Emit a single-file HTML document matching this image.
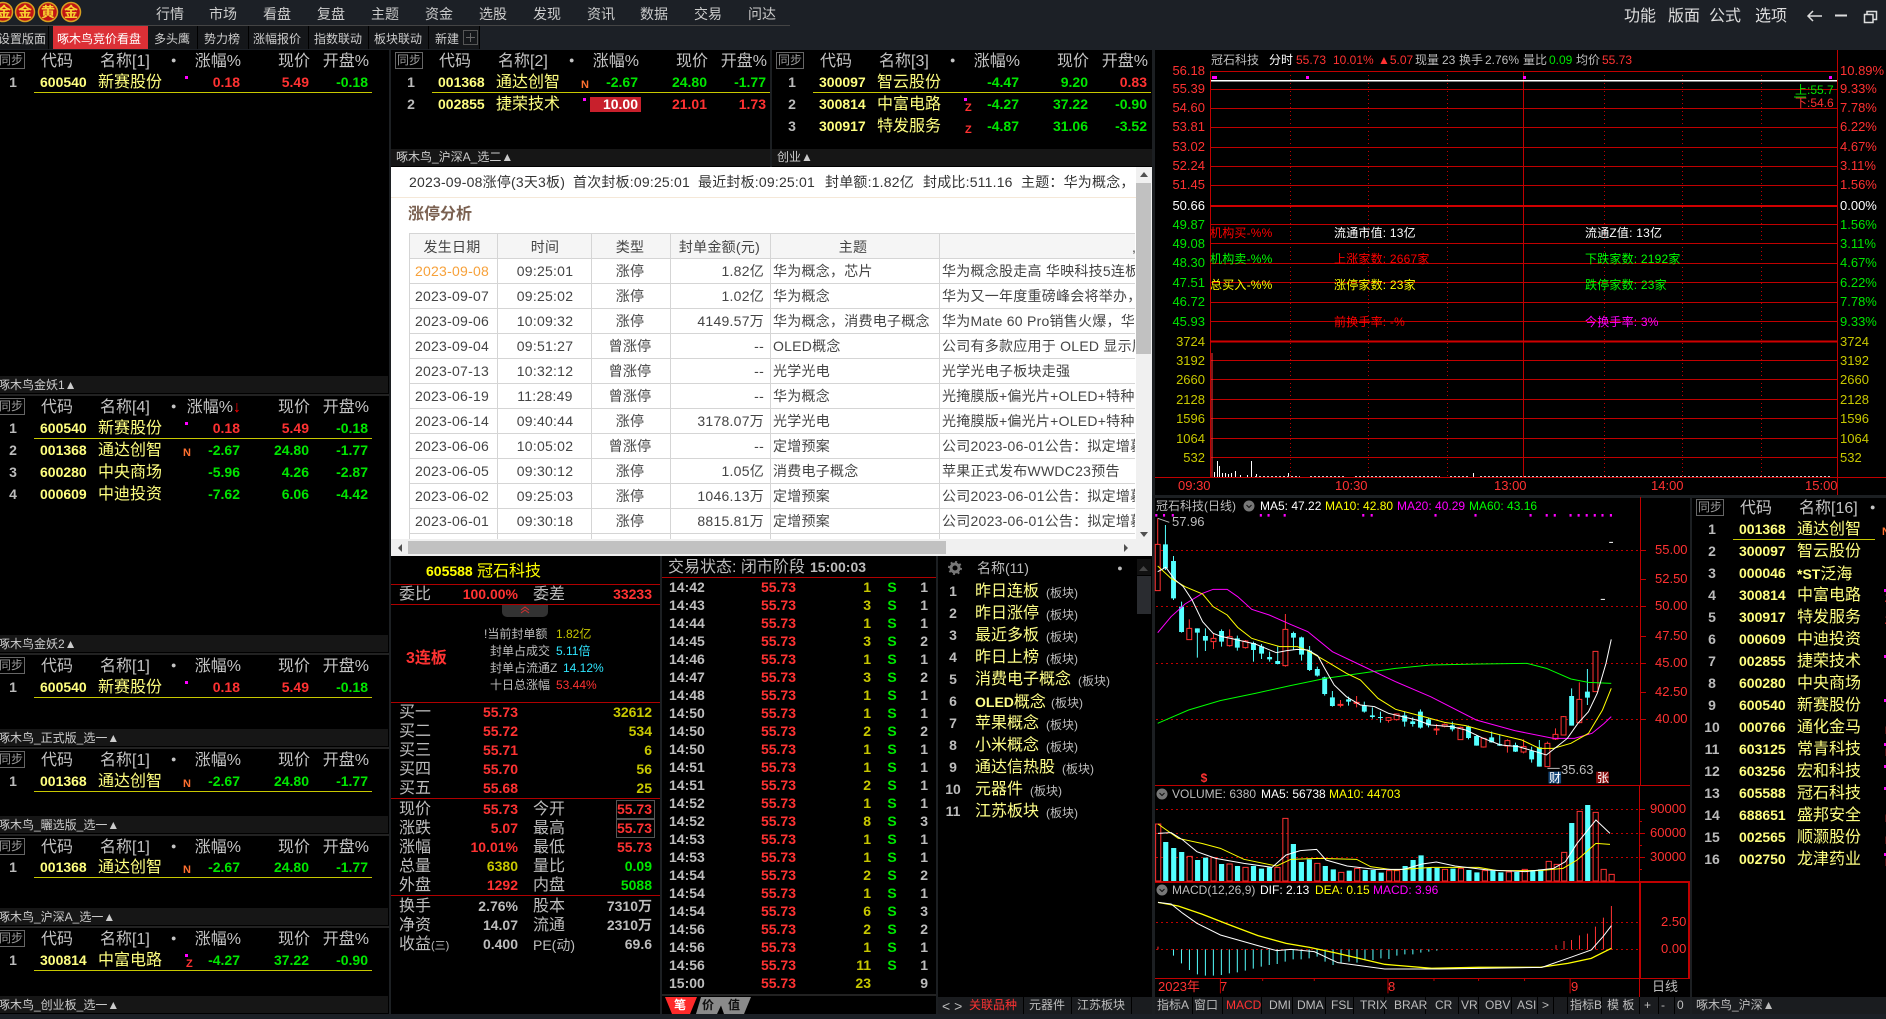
<!DOCTYPE html>
<html lang="zh"><head><meta charset="utf-8"><title>通达信</title>
<style>
html,body{margin:0;padding:0;background:#000}
body{position:relative;width:1886px;height:1019px;overflow:hidden;font-family:"Liberation Sans","WenQuanYi Zen Hei","Noto Sans CJK SC",sans-serif;font-size:13px;color:#ccc}
div,svg{position:absolute}
svg{left:0;top:0;overflow:visible}
.bx{background:#1c2026}
i{position:absolute;font-style:normal;line-height:20px;margin-top:-10px;white-space:nowrap}
.re{color:#ff3232}.gr{color:#00e600}.ye{color:#ffff00}.dy{color:#c8c800}.wh{color:#fff}.gy{color:#bdbdbd}.ma{color:#ff00ff}.cy{color:#2fe6ff}.lr{color:#f00}
.r{transform:translateX(-100%)}.c{transform:translateX(-50%)}
.f12{font-size:12px}.f14{font-size:14px}.f16{font-size:16px;margin-top:-9px}
.ov{font-size:12px;letter-spacing:.2px}
.bd{font-weight:bold}
.w{width:0;height:0}
.w>*{position:absolute;line-height:20px;top:-10px;white-space:nowrap;font-style:normal;font-weight:bold;font-size:14px}
.w .i{left:13px;transform:translateX(-50%);color:#bbb}
.w .co{left:40px;color:#ffff80}
.w .nm{left:98px;top:-9px;font-size:16px;font-weight:normal;color:#ffff80}
.w .a{left:240px;transform:translateX(-100%)}
.w .b{left:309px;transform:translateX(-100%)}
.w .e{left:368px;transform:translateX(-100%)}
.w .dot{left:185px;top:-6px;width:3px;height:3px;background:#f0f}
.w .N{left:183px;top:-7px;font-size:11px;color:#ff7030}
.w .Z{left:186px;top:-6px;font-size:11px;color:#ff3232}
.w .sy{left:-3px;top:-8px;width:26px;height:15px;line-height:15px;border:1px solid #666;font-size:12px;font-weight:normal;color:#999;text-align:center}
.w .h1,.w .h2,.w .h3,.w .h4,.w .h5{top:-8px;font-size:16px;font-weight:normal;color:#c4c4c4}
.w .h1{left:41px}.w .h2{left:100px}.w .h3{left:171px;top:-10px;font-size:9px}
.w .h4{left:241px;transform:translateX(-100%)}.w .h5{left:278px}.w .h6{left:369px;top:-8px;transform:translateX(-100%);font-size:16px;font-weight:normal;color:#c4c4c4}
.w .ln{left:34px;top:10px;width:338px;height:1px;background:#c8c800}
.band{background:#161616;height:17px}
.tr{width:0;height:0;color:#444}
.tr>*{position:absolute;top:-10px;line-height:20px;white-space:nowrap;font-style:normal;font-size:14px;color:#444;letter-spacing:.25px}
.tr .d{left:452px;transform:translateX(-50%)}
.tr .t{left:545px;transform:translateX(-50%)}
.tr .y{left:630px;transform:translateX(-50%)}
.tr .m{left:764px;transform:translateX(-100%)}
.tr .h{left:773px}
.tr .x{left:942px}
.nf{color:#333;font-size:14px;letter-spacing:.2px}
.ql{background:#b00000;height:1px;left:391px;width:269px}
.tb{background:#1a1c1f;top:997px;height:17px}
</style></head><body>

<!-- top chrome -->
<div class="bx" style="left:0;top:0;width:1886px;height:50px"></div>
<div style="left:0;top:25px;width:790px;height:1px;background:#444"></div>
<svg width="90" height="26"><g stroke="#d8a020" stroke-width="1.5" fill="#c01414"><circle cx="3" cy="12" r="9.5"/><circle cx="25" cy="12" r="9.5"/><circle cx="48" cy="12" r="9.5"/><circle cx="71" cy="12" r="9.5"/></g></svg>
<i class="f14 bd c" style="left:4px;top:12px;color:#f8d030">金</i><i class="f14 bd c" style="left:25px;top:12px;color:#f8d030">金</i><i class="f14 bd c" style="left:48px;top:12px;color:#f8d030">黄</i><i class="f14 bd c" style="left:71px;top:12px;color:#f8d030">金</i>
<i class="c f14" style="left:170px;top:14px">行情</i><i class="c f14" style="left:223px;top:14px">市场</i><i class="c f14" style="left:277px;top:14px">看盘</i><i class="c f14" style="left:331px;top:14px">复盘</i><i class="c f14" style="left:385px;top:14px">主题</i><i class="c f14" style="left:439px;top:14px">资金</i><i class="c f14" style="left:493px;top:14px">选股</i><i class="c f14" style="left:547px;top:14px">发现</i><i class="c f14" style="left:601px;top:14px">资讯</i><i class="c f14" style="left:654px;top:14px">数据</i><i class="c f14" style="left:708px;top:14px">交易</i><i class="c f14" style="left:762px;top:14px">问达</i>
<i class="f16" style="left:1624px;top:16px;color:#ddd">功能</i><i class="f16" style="left:1668px;top:16px;color:#ddd">版面</i><i class="f16" style="left:1709px;top:16px;color:#ddd">公式</i><i class="f16" style="left:1755px;top:16px;color:#ddd">选项</i>
<svg width="1886" height="30" fill="none" stroke="#ddd" stroke-width="1.5"><path d="M1822 16H1808M1813 11L1808 16L1813 21"/><path d="M1835 15.500H1847" stroke-width="2"/><path d="M1864.500 14.500h8.500v8h-8.500zM1867 14.500v-3h9.500v8h-3.500"/></svg>

<!-- tabs -->
<div style="left:0;top:26px;width:479px;height:23px;background:#15171a"></div>
<div style="left:53px;top:26px;width:95px;height:23px;background:#dc3036"></div>
<svg width="500" height="50" stroke="#000"><path d="M48.500 26V49M197.500 26V49M248.500 26V49M308.500 26V49M368.500 26V49M428.500 26V49M479.500 26V49"/><rect x="463.500" y="30.500" width="14" height="14" fill="none" stroke="#555"/><path d="M466 37.500H475M470.500 33V42" stroke="#666"/></svg>
<i class="f12" style="left:-2px;top:39px">设置版面</i><i class="f12 wh" style="left:57px;top:39px">啄木鸟竞价看盘</i><i class="f12" style="left:154px;top:39px">多头鹰</i><i class="f12" style="left:204px;top:39px">势力榜</i><i class="f12" style="left:253px;top:39px">涨幅报价</i><i class="f12" style="left:314px;top:39px">指数联动</i><i class="f12" style="left:374px;top:39px">板块联动</i><i class="f12" style="left:435px;top:39px">新建</i>

<!-- separators -->
<div style="left:389px;top:50px;width:2px;height:969px;background:#1c1f22"></div>
<div style="left:770px;top:50px;width:2px;height:117px;background:#1c1f22"></div>
<div style="left:1152px;top:50px;width:3px;height:969px;background:#1c1f22"></div>
<div style="left:660px;top:556px;width:2px;height:463px;background:#1c1f22"></div>
<div style="left:936px;top:556px;width:2px;height:463px;background:#1c1f22"></div>
<div style="left:1690px;top:495px;width:2px;height:524px;background:#1c1f22"></div>
<div style="left:1155px;top:495px;width:731px;height:3px;background:#1c1f22"></div>
<div style="left:0;top:1014px;width:1886px;height:5px;background:#1c2026"></div>

<!-- left lists -->
<div class="w" style="left:0;top:60px"><u class="sy" style="text-decoration:none">同步</u><em class="h1">代码</em><em class="h2">名称[1]</em><em class="h3">●</em><em class="h4">涨幅%</em><em class="h5">现价</em><em class="h6">开盘%</em></div>
<div class="w" style="left:0;top:82px"><b class="i">1</b><b class="co">600540</b><em class="nm">新赛股份</em><u class="dot"></u><b class="a re">0.18</b><b class="b re">5.49</b><b class="e gr">-0.18</b><u class="ln"></u></div>

<div class="band" style="left:0;top:376px;width:388px"></div><i class="f12" style="left:-2px;top:385px">啄木鸟金妖1▲</i>
<div style="left:0;top:394px;width:389px;height:2px;background:#222"></div>
<div class="w" style="left:0;top:406px"><u class="sy" style="text-decoration:none">同步</u><em class="h1">代码</em><em class="h2">名称[4]</em><em class="h3">●</em><em class="h4">涨幅%<span class="lr">↓</span></em><em class="h5">现价</em><em class="h6">开盘%</em></div>
<div class="w" style="left:0;top:428px"><b class="i">1</b><b class="co">600540</b><em class="nm">新赛股份</em><u class="dot"></u><b class="a re">0.18</b><b class="b re">5.49</b><b class="e gr">-0.18</b><u class="ln"></u></div>
<div class="w" style="left:0;top:450px"><b class="i">2</b><b class="co">001368</b><em class="nm">通达创智</em><b class="N">N</b><b class="a gr">-2.67</b><b class="b gr">24.80</b><b class="e gr">-1.77</b></div>
<div class="w" style="left:0;top:472px"><b class="i">3</b><b class="co">600280</b><em class="nm">中央商场</em><b class="a gr">-5.96</b><b class="b gr">4.26</b><b class="e gr">-2.87</b></div>
<div class="w" style="left:0;top:494px"><b class="i">4</b><b class="co">000609</b><em class="nm">中迪投资</em><b class="a gr">-7.62</b><b class="b gr">6.06</b><b class="e gr">-4.42</b></div>

<div class="band" style="left:0;top:635px;width:388px"></div><i class="f12" style="left:-2px;top:644px">啄木鸟金妖2▲</i>
<div style="left:0;top:653px;width:389px;height:2px;background:#222"></div>
<div class="w" style="left:0;top:665px"><u class="sy" style="text-decoration:none">同步</u><em class="h1">代码</em><em class="h2">名称[1]</em><em class="h3">●</em><em class="h4">涨幅%</em><em class="h5">现价</em><em class="h6">开盘%</em></div>
<div class="w" style="left:0;top:687px"><b class="i">1</b><b class="co">600540</b><em class="nm">新赛股份</em><u class="dot"></u><b class="a re">0.18</b><b class="b re">5.49</b><b class="e gr">-0.18</b><u class="ln"></u></div>

<div class="band" style="left:0;top:729px;width:388px"></div><i class="f12" style="left:-2px;top:738px">啄木鸟_正式版_选一▲</i>
<div style="left:0;top:747px;width:389px;height:2px;background:#222"></div>
<div class="w" style="left:0;top:759px"><u class="sy" style="text-decoration:none">同步</u><em class="h1">代码</em><em class="h2">名称[1]</em><em class="h3">●</em><em class="h4">涨幅%</em><em class="h5">现价</em><em class="h6">开盘%</em></div>
<div class="w" style="left:0;top:781px"><b class="i">1</b><b class="co">001368</b><em class="nm">通达创智</em><b class="N">N</b><b class="a gr">-2.67</b><b class="b gr">24.80</b><b class="e gr">-1.77</b><u class="ln"></u></div>

<div class="band" style="left:0;top:816px;width:388px"></div><i class="f12" style="left:-2px;top:825px">啄木鸟_曬选版_选一▲</i>
<div style="left:0;top:834px;width:389px;height:2px;background:#222"></div>
<div class="w" style="left:0;top:846px"><u class="sy" style="text-decoration:none">同步</u><em class="h1">代码</em><em class="h2">名称[1]</em><em class="h3">●</em><em class="h4">涨幅%</em><em class="h5">现价</em><em class="h6">开盘%</em></div>
<div class="w" style="left:0;top:867px"><b class="i">1</b><b class="co">001368</b><em class="nm">通达创智</em><b class="N">N</b><b class="a gr">-2.67</b><b class="b gr">24.80</b><b class="e gr">-1.77</b><u class="ln"></u></div>

<div class="band" style="left:0;top:908px;width:388px"></div><i class="f12" style="left:-2px;top:917px">啄木鸟_沪深A_选一▲</i>
<div style="left:0;top:926px;width:389px;height:2px;background:#222"></div>
<div class="w" style="left:0;top:938px"><u class="sy" style="text-decoration:none">同步</u><em class="h1">代码</em><em class="h2">名称[1]</em><em class="h3">●</em><em class="h4">涨幅%</em><em class="h5">现价</em><em class="h6">开盘%</em></div>
<div class="w" style="left:0;top:960px"><b class="i">1</b><b class="co">300814</b><em class="nm">中富电路</em><u class="dot"></u><b class="Z">Z</b><b class="a gr">-4.27</b><b class="b gr">37.22</b><b class="e gr">-0.90</b><u class="ln"></u></div>

<div class="band" style="left:0;top:996px;width:388px"></div><i class="f12" style="left:-2px;top:1005px">啄木鸟_创业板_选一▲</i>

<!-- col 2 -->
<div class="w" style="left:398px;top:60px"><u class="sy" style="text-decoration:none">同步</u><em class="h1">代码</em><em class="h2">名称[2]</em><em class="h3">●</em><em class="h4">涨幅%</em><em class="h5">现价</em><em class="h6">开盘%</em></div>
<div class="w" style="left:398px;top:82px"><b class="i">1</b><b class="co">001368</b><em class="nm">通达创智</em><b class="N">N</b><b class="a gr">-2.67</b><b class="b gr">24.80</b><b class="e gr">-1.77</b><u class="ln"></u></div>
<div style="left:590px;top:97px;width:51px;height:15px;background:#c8202c"></div>
<div class="w" style="left:398px;top:104px"><b class="i">2</b><b class="co">002855</b><em class="nm">捷荣技术</em><u class="dot"></u><b class="a wh">10.00</b><b class="b re">21.01</b><b class="e re">1.73</b></div>
<div class="band" style="left:391px;top:149px;width:379px"></div><i class="f12" style="left:396px;top:157px">啄木鸟_沪深A_选二▲</i>

<!-- col 3 -->
<div class="w" style="left:779px;top:60px"><u class="sy" style="text-decoration:none">同步</u><em class="h1">代码</em><em class="h2">名称[3]</em><em class="h3">●</em><em class="h4">涨幅%</em><em class="h5">现价</em><em class="h6">开盘%</em></div>
<div class="w" style="left:779px;top:82px"><b class="i">1</b><b class="co">300097</b><em class="nm">智云股份</em><b class="a gr">-4.47</b><b class="b gr">9.20</b><b class="e re">0.83</b><u class="ln"></u></div>
<div class="w" style="left:779px;top:104px"><b class="i">2</b><b class="co">300814</b><em class="nm">中富电路</em><u class="dot"></u><b class="Z">Z</b><b class="a gr">-4.27</b><b class="b gr">37.22</b><b class="e gr">-0.90</b></div>
<div class="w" style="left:779px;top:126px"><b class="i">3</b><b class="co">300917</b><em class="nm">特发服务</em><b class="Z">Z</b><b class="a gr">-4.87</b><b class="b gr">31.06</b><b class="e gr">-3.52</b></div>
<div class="band" style="left:772px;top:149px;width:380px"></div><i class="f12" style="left:777px;top:157px">创业▲</i>

<!-- browser panel -->
<div style="left:391px;top:167px;width:761px;height:389px;background:#fff"></div>
<svg width="1886" height="600" shape-rendering="crispEdges">
<rect x="409" y="233" width="726" height="25" fill="#f5f5f5"/>
<path d="M391 197.500H1136" stroke="#f5e8d8"/>
<path d="M409.500 233V539M497.500 233V539M591.500 233V539M670.500 233V539M770.500 233V539M939.500 233V539M409 233.500H1135M409 258.500H1135M409 283.500H1135M409 308.500H1135M409 333.500H1135M409 358.500H1135M409 383.500H1135M409 408.500H1135M409 433.500H1135M409 458.500H1135M409 483.500H1135M409 508.500H1135M409 533.500H1135" stroke="#d5d5d5"/>
</svg>
<i class="nf" style="left:409px;top:182px">2023-09-08涨停(3天3板)</i><i class="nf" style="left:573px;top:182px">首次封板:09:25:01</i><i class="nf" style="left:698px;top:182px">最近封板:09:25:01</i><i class="nf" style="left:825px;top:182px">封单额:1.82亿</i><i class="nf" style="left:923px;top:182px">封成比:511.16</i><i class="nf" style="left:1021px;top:182px">主题：华为概念，</i>
<i class="f16 bd" style="left:408px;top:214px;color:#7a6050">涨停分析</i>
<div style="left:391px;top:167px;width:744px;height:372px;overflow:hidden">
<div style="left:-391px;top:-167px;width:1886px;height:1019px">
<div class="tr" style="left:0;top:247px"><em class="d">发生日期</em><em class="t">时间</em><em class="y">类型</em><em class="m" style="left:760px">封单金额(元)</em><em class="h" style="left:853px;transform:translateX(-50%)">主题</em><em class="x" style="left:1132px">,</em></div>
<div class="tr" style="left:0;top:271px"><em class="d" style="color:#f7a13a">2023-09-08</em><em class="t">09:25:01</em><em class="y">涨停</em><em class="m">1.82亿</em><em class="h">华为概念，芯片</em><em class="x">华为概念股走高 华映科技5连板</em></div>
<div class="tr" style="left:0;top:296px"><em class="d">2023-09-07</em><em class="t">09:25:02</em><em class="y">涨停</em><em class="m">1.02亿</em><em class="h">华为概念</em><em class="x">华为又一年度重磅峰会将举办，</em></div>
<div class="tr" style="left:0;top:321px"><em class="d">2023-09-06</em><em class="t">10:09:32</em><em class="y">涨停</em><em class="m">4149.57万</em><em class="h">华为概念，消费电子概念</em><em class="x">华为Mate 60 Pro销售火爆，华为</em></div>
<div class="tr" style="left:0;top:346px"><em class="d">2023-09-04</em><em class="t">09:51:27</em><em class="y">曾涨停</em><em class="m">--</em><em class="h">OLED概念</em><em class="x">公司有多款应用于 OLED 显示屏</em></div>
<div class="tr" style="left:0;top:371px"><em class="d">2023-07-13</em><em class="t">10:32:12</em><em class="y">曾涨停</em><em class="m">--</em><em class="h">光学光电</em><em class="x">光学光电子板块走强</em></div>
<div class="tr" style="left:0;top:396px"><em class="d">2023-06-19</em><em class="t">11:28:49</em><em class="y">曾涨停</em><em class="m">--</em><em class="h">华为概念</em><em class="x">光掩膜版+偏光片+OLED+特种膜</em></div>
<div class="tr" style="left:0;top:421px"><em class="d">2023-06-14</em><em class="t">09:40:44</em><em class="y">涨停</em><em class="m">3178.07万</em><em class="h">光学光电</em><em class="x">光掩膜版+偏光片+OLED+特种膜</em></div>
<div class="tr" style="left:0;top:446px"><em class="d">2023-06-06</em><em class="t">10:05:02</em><em class="y">曾涨停</em><em class="m">--</em><em class="h">定增预案</em><em class="x">公司2023-06-01公告：拟定增募</em></div>
<div class="tr" style="left:0;top:471px"><em class="d">2023-06-05</em><em class="t">09:30:12</em><em class="y">涨停</em><em class="m">1.05亿</em><em class="h">消费电子概念</em><em class="x">苹果正式发布WWDC23预告</em></div>
<div class="tr" style="left:0;top:496px"><em class="d">2023-06-02</em><em class="t">09:25:03</em><em class="y">涨停</em><em class="m">1046.13万</em><em class="h">定增预案</em><em class="x">公司2023-06-01公告：拟定增募</em></div>
<div class="tr" style="left:0;top:521px"><em class="d">2023-06-01</em><em class="t">09:30:18</em><em class="y">涨停</em><em class="m">8815.81万</em><em class="h">定增预案</em><em class="x">公司2023-06-01公告：拟定增募</em></div>
</div></div>
<div style="left:1136px;top:167px;width:16px;height:389px;background:#f0f0f0"></div>
<div style="left:1136px;top:183px;width:15px;height:171px;background:#c1c1c1"></div>
<div style="left:391px;top:539px;width:745px;height:17px;background:#f0f0f0"></div>
<div style="left:408px;top:541px;width:538px;height:13px;background:#c1c1c1"></div>
<svg width="1886" height="600" fill="#505050"><path d="M1140 532h8l-4 5zM1140 177h8l-4-5zM402 544v8l-4-4zM1124 544v8l4-4z"/></svg>

<!-- quote panel -->
<i class="f14 bd ye" style="left:426px;top:571px">605588</i><i class="f16 ye" style="left:477px;top:571px">冠石科技</i>
<div class="ql" style="top:584px"></div><div class="ql" style="top:604px"></div><div class="ql" style="top:702px"></div><div class="ql" style="top:798px"></div><div class="ql" style="top:895px"></div>
<i class="f16 gy" style="left:399px;top:594px">委比</i><i class="f14 bd re r" style="left:518px;top:594px">100.00%</i><i class="f16 gy" style="left:533px;top:594px">委差</i><i class="f14 bd re r" style="left:652px;top:594px">33233</i>
<div style="left:502px;top:605px;width:46px;height:12px;background:#333;border-radius:0 0 5px 5px"></div>
<svg width="1886" height="700" fill="none" stroke="#d03030"><path d="M521 610l4-3 4 3M521 613l4-3 4 3"/></svg>
<i class="f16 bd re" style="left:406px;top:658px">3连板</i>
<i class="f12 gy" style="left:484px;top:634px">!当前封单额</i><i class="f12 dy" style="left:556px;top:634px">1.82亿</i>
<i class="f12 gy" style="left:490px;top:651px">封单占成交</i><i class="f12 cy" style="left:556px;top:651px">5.11倍</i>
<i class="f12 gy" style="left:490px;top:668px">封单占流通Z</i><i class="f12 cy" style="left:563px;top:668px">14.12%</i>
<i class="f12 gy" style="left:490px;top:685px">十日总涨幅</i><i class="f12 re" style="left:556px;top:685px">53.44%</i>
<i class="f16 gy" style="left:399px;top:712px">买一</i><i class="f14 bd re r" style="left:518px;top:712px">55.73</i><i class="f14 bd dy r" style="left:652px;top:712px">32612</i>
<i class="f16 gy" style="left:399px;top:731px">买二</i><i class="f14 bd re r" style="left:518px;top:731px">55.72</i><i class="f14 bd dy r" style="left:652px;top:731px">534</i>
<i class="f16 gy" style="left:399px;top:750px">买三</i><i class="f14 bd re r" style="left:518px;top:750px">55.71</i><i class="f14 bd dy r" style="left:652px;top:750px">6</i>
<i class="f16 gy" style="left:399px;top:769px">买四</i><i class="f14 bd re r" style="left:518px;top:769px">55.70</i><i class="f14 bd dy r" style="left:652px;top:769px">56</i>
<i class="f16 gy" style="left:399px;top:788px">买五</i><i class="f14 bd re r" style="left:518px;top:788px">55.68</i><i class="f14 bd dy r" style="left:652px;top:788px">25</i>
<i class="f16 gy" style="left:399px;top:809px">现价</i><i class="f14 bd re r" style="left:518px;top:809px">55.73</i><i class="f16 gy" style="left:533px;top:809px">今开</i><i class="f14 bd re r" style="left:652px;top:809px">55.73</i>
<i class="f16 gy" style="left:399px;top:828px">涨跌</i><i class="f14 bd re r" style="left:518px;top:828px">5.07</i><i class="f16 gy" style="left:533px;top:828px">最高</i><i class="f14 bd re r" style="left:652px;top:828px">55.73</i>
<i class="f16 gy" style="left:399px;top:847px">涨幅</i><i class="f14 bd re r" style="left:518px;top:847px">10.01%</i><i class="f16 gy" style="left:533px;top:847px">最低</i><i class="f14 bd re r" style="left:652px;top:847px">55.73</i>
<i class="f16 gy" style="left:399px;top:866px">总量</i><i class="f14 bd dy r" style="left:518px;top:866px">6380</i><i class="f16 gy" style="left:533px;top:866px">量比</i><i class="f14 bd gr r" style="left:652px;top:866px">0.09</i>
<i class="f16 gy" style="left:399px;top:885px">外盘</i><i class="f14 bd re r" style="left:518px;top:885px">1292</i><i class="f16 gy" style="left:533px;top:885px">内盘</i><i class="f14 bd gr r" style="left:652px;top:885px">5088</i>
<svg width="1886" height="900" fill="none" stroke="#555"><path d="M616.500 800.500h38v18h-38zM616.500 819.500h38v18h-38z"/></svg>
<i class="f16 gy" style="left:399px;top:906px">换手</i><i class="f14 bd gy r" style="left:518px;top:906px">2.76%</i><i class="f16 gy" style="left:533px;top:906px">股本</i><i class="f14 bd gy r" style="left:652px;top:906px">7310万</i>
<i class="f16 gy" style="left:399px;top:925px">净资</i><i class="f14 bd gy r" style="left:518px;top:925px">14.07</i><i class="f16 gy" style="left:533px;top:925px">流通</i><i class="f14 bd gy r" style="left:652px;top:925px">2310万</i>
<i class="f16 gy" style="left:399px;top:944px">收益<span style="font-size:11px">(三)</span></i><i class="f14 bd gy r" style="left:518px;top:944px">0.400</i><i class="f14 gy" style="left:533px;top:945px">PE(动)</i><i class="f14 bd gy r" style="left:652px;top:944px">69.6</i>

<!-- trades -->
<i class="f16 gy" style="left:668px;top:567px">交易状态: 闭市阶段</i><i class="f14 bd gy" style="left:810px;top:567px">15:00:03</i>
<div style="left:662px;top:577px;width:274px;height:1px;background:#b00000"></div>
<i class="f14 bd gy" style="left:669px;top:587px">14:42</i><i class="f14 bd re r" style="left:796px;top:587px">55.73</i><i class="f14 bd dy r" style="left:871px;top:587px">1</i><i class="f14 bd gr c" style="left:892px;top:587px">S</i><i class="f14 bd gy r" style="left:928px;top:587px">1</i>
<i class="f14 bd gy" style="left:669px;top:605px">14:43</i><i class="f14 bd re r" style="left:796px;top:605px">55.73</i><i class="f14 bd dy r" style="left:871px;top:605px">3</i><i class="f14 bd gr c" style="left:892px;top:605px">S</i><i class="f14 bd gy r" style="left:928px;top:605px">1</i>
<i class="f14 bd gy" style="left:669px;top:623px">14:44</i><i class="f14 bd re r" style="left:796px;top:623px">55.73</i><i class="f14 bd dy r" style="left:871px;top:623px">1</i><i class="f14 bd gr c" style="left:892px;top:623px">S</i><i class="f14 bd gy r" style="left:928px;top:623px">1</i>
<i class="f14 bd gy" style="left:669px;top:641px">14:45</i><i class="f14 bd re r" style="left:796px;top:641px">55.73</i><i class="f14 bd dy r" style="left:871px;top:641px">3</i><i class="f14 bd gr c" style="left:892px;top:641px">S</i><i class="f14 bd gy r" style="left:928px;top:641px">2</i>
<i class="f14 bd gy" style="left:669px;top:659px">14:46</i><i class="f14 bd re r" style="left:796px;top:659px">55.73</i><i class="f14 bd dy r" style="left:871px;top:659px">1</i><i class="f14 bd gr c" style="left:892px;top:659px">S</i><i class="f14 bd gy r" style="left:928px;top:659px">1</i>
<i class="f14 bd gy" style="left:669px;top:677px">14:47</i><i class="f14 bd re r" style="left:796px;top:677px">55.73</i><i class="f14 bd dy r" style="left:871px;top:677px">3</i><i class="f14 bd gr c" style="left:892px;top:677px">S</i><i class="f14 bd gy r" style="left:928px;top:677px">2</i>
<i class="f14 bd gy" style="left:669px;top:695px">14:48</i><i class="f14 bd re r" style="left:796px;top:695px">55.73</i><i class="f14 bd dy r" style="left:871px;top:695px">1</i><i class="f14 bd gr c" style="left:892px;top:695px">S</i><i class="f14 bd gy r" style="left:928px;top:695px">1</i>
<i class="f14 bd gy" style="left:669px;top:713px">14:50</i><i class="f14 bd re r" style="left:796px;top:713px">55.73</i><i class="f14 bd dy r" style="left:871px;top:713px">1</i><i class="f14 bd gr c" style="left:892px;top:713px">S</i><i class="f14 bd gy r" style="left:928px;top:713px">1</i>
<i class="f14 bd gy" style="left:669px;top:731px">14:50</i><i class="f14 bd re r" style="left:796px;top:731px">55.73</i><i class="f14 bd dy r" style="left:871px;top:731px">2</i><i class="f14 bd gr c" style="left:892px;top:731px">S</i><i class="f14 bd gy r" style="left:928px;top:731px">2</i>
<i class="f14 bd gy" style="left:669px;top:749px">14:50</i><i class="f14 bd re r" style="left:796px;top:749px">55.73</i><i class="f14 bd dy r" style="left:871px;top:749px">1</i><i class="f14 bd gr c" style="left:892px;top:749px">S</i><i class="f14 bd gy r" style="left:928px;top:749px">1</i>
<i class="f14 bd gy" style="left:669px;top:767px">14:51</i><i class="f14 bd re r" style="left:796px;top:767px">55.73</i><i class="f14 bd dy r" style="left:871px;top:767px">1</i><i class="f14 bd gr c" style="left:892px;top:767px">S</i><i class="f14 bd gy r" style="left:928px;top:767px">1</i>
<i class="f14 bd gy" style="left:669px;top:785px">14:51</i><i class="f14 bd re r" style="left:796px;top:785px">55.73</i><i class="f14 bd dy r" style="left:871px;top:785px">2</i><i class="f14 bd gr c" style="left:892px;top:785px">S</i><i class="f14 bd gy r" style="left:928px;top:785px">1</i>
<i class="f14 bd gy" style="left:669px;top:803px">14:52</i><i class="f14 bd re r" style="left:796px;top:803px">55.73</i><i class="f14 bd dy r" style="left:871px;top:803px">1</i><i class="f14 bd gr c" style="left:892px;top:803px">S</i><i class="f14 bd gy r" style="left:928px;top:803px">1</i>
<i class="f14 bd gy" style="left:669px;top:821px">14:52</i><i class="f14 bd re r" style="left:796px;top:821px">55.73</i><i class="f14 bd dy r" style="left:871px;top:821px">8</i><i class="f14 bd gr c" style="left:892px;top:821px">S</i><i class="f14 bd gy r" style="left:928px;top:821px">3</i>
<i class="f14 bd gy" style="left:669px;top:839px">14:53</i><i class="f14 bd re r" style="left:796px;top:839px">55.73</i><i class="f14 bd dy r" style="left:871px;top:839px">1</i><i class="f14 bd gr c" style="left:892px;top:839px">S</i><i class="f14 bd gy r" style="left:928px;top:839px">1</i>
<i class="f14 bd gy" style="left:669px;top:857px">14:53</i><i class="f14 bd re r" style="left:796px;top:857px">55.73</i><i class="f14 bd dy r" style="left:871px;top:857px">1</i><i class="f14 bd gr c" style="left:892px;top:857px">S</i><i class="f14 bd gy r" style="left:928px;top:857px">1</i>
<i class="f14 bd gy" style="left:669px;top:875px">14:54</i><i class="f14 bd re r" style="left:796px;top:875px">55.73</i><i class="f14 bd dy r" style="left:871px;top:875px">2</i><i class="f14 bd gr c" style="left:892px;top:875px">S</i><i class="f14 bd gy r" style="left:928px;top:875px">2</i>
<i class="f14 bd gy" style="left:669px;top:893px">14:54</i><i class="f14 bd re r" style="left:796px;top:893px">55.73</i><i class="f14 bd dy r" style="left:871px;top:893px">1</i><i class="f14 bd gr c" style="left:892px;top:893px">S</i><i class="f14 bd gy r" style="left:928px;top:893px">1</i>
<i class="f14 bd gy" style="left:669px;top:911px">14:54</i><i class="f14 bd re r" style="left:796px;top:911px">55.73</i><i class="f14 bd dy r" style="left:871px;top:911px">6</i><i class="f14 bd gr c" style="left:892px;top:911px">S</i><i class="f14 bd gy r" style="left:928px;top:911px">3</i>
<i class="f14 bd gy" style="left:669px;top:929px">14:56</i><i class="f14 bd re r" style="left:796px;top:929px">55.73</i><i class="f14 bd dy r" style="left:871px;top:929px">2</i><i class="f14 bd gr c" style="left:892px;top:929px">S</i><i class="f14 bd gy r" style="left:928px;top:929px">2</i>
<i class="f14 bd gy" style="left:669px;top:947px">14:56</i><i class="f14 bd re r" style="left:796px;top:947px">55.73</i><i class="f14 bd dy r" style="left:871px;top:947px">1</i><i class="f14 bd gr c" style="left:892px;top:947px">S</i><i class="f14 bd gy r" style="left:928px;top:947px">1</i>
<i class="f14 bd gy" style="left:669px;top:965px">14:56</i><i class="f14 bd re r" style="left:796px;top:965px">55.73</i><i class="f14 bd dy r" style="left:871px;top:965px">11</i><i class="f14 bd gr c" style="left:892px;top:965px">S</i><i class="f14 bd gy r" style="left:928px;top:965px">1</i>
<i class="f14 bd gy" style="left:669px;top:983px">15:00</i><i class="f14 bd re r" style="left:796px;top:983px">55.73</i><i class="f14 bd dy r" style="left:871px;top:983px">23</i><i class="f14 bd gy r" style="left:928px;top:983px">9</i>
<div style="left:662px;top:994px;width:274px;height:2px;background:#222"></div>
<svg width="1886" height="1019"><path d="M665 997H697L690 1014H672z" fill="#ff2a2a"/><path d="M701 997H725L717 1014H696z" fill="#8a8a8a"/><path d="M718 997H751L744 1014H724z" fill="#8a8a8a"/></svg>
<i class="f12 bd wh c" style="left:680px;top:1005px">笔</i><i class="f12 bd c" style="left:708px;top:1005px;color:#111">价</i><i class="f12 bd c" style="left:734px;top:1005px;color:#111">值</i>

<!-- related names -->
<svg width="1886" height="700" fill="none"><circle cx="955" cy="568" r="4" stroke="#777" stroke-width="3"/><circle cx="955" cy="568" r="6" stroke="#777" stroke-width="2" stroke-dasharray="2 2.700"/></svg>
<i class="f14 gy" style="left:977px;top:568px">名称(11)</i><i class="gy c" style="left:1120px;top:568px;font-size:9px">●</i>
<div style="left:1137px;top:559px;width:14px;height:16px;background:#111"></div>
<div style="left:1137px;top:576px;width:14px;height:38px;background:#2a2c30"></div>
<svg width="1886" height="1019" fill="#444"><path d="M1139 571h9l-4.500-5zM1139 1004h9l-4.500 5z"/></svg>
<i class="bd f14 gy c" style="left:953px;top:591px">1</i><i class="f16" style="left:975px;top:591px;color:#ffff88">昨日连板</i><i class="f12 gy" style="left:1046px;top:593px">(板块)</i>
<i class="bd f14 gy c" style="left:953px;top:613px">2</i><i class="f16" style="left:975px;top:613px;color:#ffff88">昨日涨停</i><i class="f12 gy" style="left:1046px;top:615px">(板块)</i>
<i class="bd f14 gy c" style="left:953px;top:635px">3</i><i class="f16" style="left:975px;top:635px;color:#ffff88">最近多板</i><i class="f12 gy" style="left:1046px;top:637px">(板块)</i>
<i class="bd f14 gy c" style="left:953px;top:657px">4</i><i class="f16" style="left:975px;top:657px;color:#ffff88">昨日上榜</i><i class="f12 gy" style="left:1046px;top:659px">(板块)</i>
<i class="bd f14 gy c" style="left:953px;top:679px">5</i><i class="f16" style="left:975px;top:679px;color:#ffff88">消费电子概念</i><i class="f12 gy" style="left:1078px;top:681px">(板块)</i>
<i class="bd f14 gy c" style="left:953px;top:701px">6</i><i class="f16" style="left:975px;top:701px;color:#ffff88"><b style="font-size:14px">OLED</b>概念</i><i class="f12 gy" style="left:1051px;top:703px">(板块)</i>
<i class="bd f14 gy c" style="left:953px;top:723px">7</i><i class="f16" style="left:975px;top:723px;color:#ffff88">苹果概念</i><i class="f12 gy" style="left:1046px;top:725px">(板块)</i>
<i class="bd f14 gy c" style="left:953px;top:745px">8</i><i class="f16" style="left:975px;top:745px;color:#ffff88">小米概念</i><i class="f12 gy" style="left:1046px;top:747px">(板块)</i>
<i class="bd f14 gy c" style="left:953px;top:767px">9</i><i class="f16" style="left:975px;top:767px;color:#ffff88">通达信热股</i><i class="f12 gy" style="left:1062px;top:769px">(板块)</i>
<i class="bd f14 gy c" style="left:953px;top:789px">10</i><i class="f16" style="left:975px;top:789px;color:#ffff88">元器件</i><i class="f12 gy" style="left:1030px;top:791px">(板块)</i>
<i class="bd f14 gy c" style="left:953px;top:811px">11</i><i class="f16" style="left:975px;top:811px;color:#ffff88">江苏板块</i><i class="f12 gy" style="left:1046px;top:813px">(板块)</i>
<div class="tb" style="left:938px;width:214px"></div>
<svg width="1886" height="1019" stroke="#000"><path d="M1023.500 997V1014M1071.500 997V1014M1131.500 997V1014"/></svg>
<i class="f16 gy" style="left:942px;top:1005px;font-size:14px">&lt; &gt;</i><i class="f12 re" style="left:969px;top:1005px">关联品种</i><i class="f12 gy" style="left:1029px;top:1005px">元器件</i><i class="f12 gy" style="left:1077px;top:1005px">江苏板块</i>

<!-- intraday chart -->
<i class="f12 gy" style="left:1211px;top:60px">冠石科技</i><i class="f12 wh" style="left:1269px;top:60px">分时</i><i class="f12 re" style="left:1296px;top:60px">55.73</i><i class="f12 re" style="left:1333px;top:60px">10.01%</i><i class="f12 re" style="left:1378px;top:60px">▲5.07</i><i class="f12 gy" style="left:1415px;top:60px">现量</i><i class="f12 gy" style="left:1442px;top:60px">23</i><i class="f12 gy" style="left:1459px;top:60px">换手</i><i class="f12 gy" style="left:1485px;top:60px">2.76%</i><i class="f12 gy" style="left:1523px;top:60px">量比</i><i class="f12 gr" style="left:1549px;top:60px">0.09</i><i class="f12 gy" style="left:1576px;top:60px">均价</i><i class="f12 re" style="left:1602px;top:60px">55.73</i>
<svg width="1886" height="500" shape-rendering="crispEdges" fill="none">
<path d="M1210 71.500H1837M1210 89.500H1837M1210 108.500H1837M1210 127.500H1837M1210 147.500H1837M1210 166.500H1837M1210 185.500H1837M1210 224.500H1837M1210 243.500H1837M1210 263.500H1837M1210 282.500H1837M1210 302.500H1837M1210 321.500H1837M1210 360.500H1837M1210 379.500H1837M1210 399.500H1837M1210 418.500H1837M1210 438.500H1837M1210 457.500H1837M1155 477.500H1886M1210.500 71V477M1523.500 71V477M1837.500 50V495" stroke="#c00000"/>
<path d="M1210 206H1837M1210 341.500H1837" stroke="#d00000" stroke-width="2"/>
<path d="M1290.500 71V477M1368.500 71V477M1447.500 71V477M1604.500 71V477M1682.500 71V477M1761.500 71V477" stroke="#c00000" stroke-dasharray="1 3"/>
<path d="M1211 80.500H1837" stroke="#fff" stroke-width="1.500"/>
<path d="M1212 76h5v3h-5zM1306 76h3v3h-3zM1523 76h3v3h-3zM1829 76h3v3h-3z" fill="#f0f"/>
<path d="M1212 353V477" stroke="#ff3232" stroke-width="1"/>
<path d="M1214.500 472V477M1217.500 461V477M1219.500 466V477M1222.500 473V477M1225.500 473V477M1228.500 474V477M1231.500 473V477M1235.500 471V477M1240.500 475V477M1247.500 475V477M1251.500 461V477M1256.500 474V477M1288.500 473V477M1473.500 473V477" stroke="#fff"/>
<path d="M1255 476.500H1300M1310 476.500H1344M1355 476.500H1440M1450 476.500H1470M1480 476.500H1830" stroke="#ccc" stroke-dasharray="2 2"/>
<path d="M1794 97H1806" stroke="#00e600"/>
</svg>
<i class="f12 gr" style="left:1795px;top:90px">上:55.7</i><i class="f12 re" style="left:1795px;top:103px">下:54.6</i>
<i class="re r" style="left:1205px;top:71px">56.18</i><i class="re r" style="left:1205px;top:89px">55.39</i><i class="re r" style="left:1205px;top:108px">54.60</i><i class="re r" style="left:1205px;top:127px">53.81</i><i class="re r" style="left:1205px;top:147px">53.02</i><i class="re r" style="left:1205px;top:166px">52.24</i><i class="re r" style="left:1205px;top:185px">51.45</i><i class="wh r" style="left:1205px;top:206px">50.66</i><i class="gr r" style="left:1205px;top:225px">49.87</i><i class="gr r" style="left:1205px;top:244px">49.08</i><i class="gr r" style="left:1205px;top:263px">48.30</i><i class="gr r" style="left:1205px;top:283px">47.51</i><i class="gr r" style="left:1205px;top:302px">46.72</i><i class="gr r" style="left:1205px;top:322px">45.93</i><i class="dy r" style="left:1205px;top:342px">3724</i><i class="dy r" style="left:1205px;top:361px">3192</i><i class="dy r" style="left:1205px;top:380px">2660</i><i class="dy r" style="left:1205px;top:400px">2128</i><i class="dy r" style="left:1205px;top:419px">1596</i><i class="dy r" style="left:1205px;top:439px">1064</i><i class="dy r" style="left:1205px;top:458px">532</i>
<i class="re" style="left:1840px;top:71px">10.89%</i><i class="re" style="left:1840px;top:89px">9.33%</i><i class="re" style="left:1840px;top:108px">7.78%</i><i class="re" style="left:1840px;top:127px">6.22%</i><i class="re" style="left:1840px;top:147px">4.67%</i><i class="re" style="left:1840px;top:166px">3.11%</i><i class="re" style="left:1840px;top:185px">1.56%</i><i class="wh" style="left:1840px;top:206px">0.00%</i><i class="gr" style="left:1840px;top:225px">1.56%</i><i class="gr" style="left:1840px;top:244px">3.11%</i><i class="gr" style="left:1840px;top:263px">4.67%</i><i class="gr" style="left:1840px;top:283px">6.22%</i><i class="gr" style="left:1840px;top:302px">7.78%</i><i class="gr" style="left:1840px;top:322px">9.33%</i><i class="dy" style="left:1840px;top:342px">3724</i><i class="dy" style="left:1840px;top:361px">3192</i><i class="dy" style="left:1840px;top:380px">2660</i><i class="dy" style="left:1840px;top:400px">2128</i><i class="dy" style="left:1840px;top:419px">1596</i><i class="dy" style="left:1840px;top:439px">1064</i><i class="dy" style="left:1840px;top:458px">532</i>
<i class="re" style="left:1178px;top:486px">09:30</i><i class="re" style="left:1335px;top:486px">10:30</i><i class="re" style="left:1494px;top:486px">13:00</i><i class="re" style="left:1651px;top:486px">14:00</i><i class="re" style="left:1805px;top:486px">15:00</i>
<i class="ov lr" style="left:1210px;top:233px">机构买-%%</i><i class="ov wh" style="left:1334px;top:233px">流通市值: 13亿</i><i class="ov wh" style="left:1585px;top:233px">流通Z值: 13亿</i>
<i class="ov" style="left:1210px;top:259px;color:#0f0">机构卖-%%</i><i class="ov lr" style="left:1334px;top:259px">上涨家数: 2667家</i><i class="ov" style="left:1585px;top:259px;color:#0f0">下跌家数: 2192家</i>
<i class="ov ye" style="left:1210px;top:285px">总买入-%%</i><i class="ov ye" style="left:1334px;top:285px">涨停家数: 23家</i><i class="ov" style="left:1585px;top:285px;color:#0f0">跌停家数: 23家</i>
<i class="ov lr" style="left:1334px;top:322px">前换手率: -%</i><i class="ov ma" style="left:1585px;top:322px">今换手率: 3%</i>

<!-- K-line -->
<i class="f12 gy" style="left:1156px;top:506px">冠石科技(日线)</i>
<svg width="1886" height="1019"><circle cx="1249" cy="506" r="5.500" fill="#777"/><circle cx="1162" cy="794" r="5.500" fill="#777"/><circle cx="1162" cy="890" r="5.500" fill="#777"/><path d="M1246.500 505l2.500 2.500 2.500-2.500M1159.500 793l2.500 2.500 2.500-2.500M1159.500 889l2.500 2.500 2.500-2.500" fill="none" stroke="#111"/></svg>
<i class="f12 wh" style="left:1260px;top:506px">MA5: 47.22</i><i class="f12 ye" style="left:1325px;top:506px">MA10: 42.80</i><i class="f12 ma" style="left:1397px;top:506px">MA20: 40.29</i><i class="f12" style="left:1469px;top:506px;color:#0f0">MA60: 43.16</i>
<svg width="1886" height="1019" shape-rendering="crispEdges" fill="none">
<path d="M1156 550.500H1640M1156 606.500H1640M1156 663.500H1640M1156 719.500H1640M1156 809.500H1639M1156 833.500H1639M1156 857.500H1639M1156 922.500H1639M1156 949.500H1639" stroke="#c00000" stroke-dasharray="2 3"/>
<path d="M1640.500 497V785M1155 785.500H1690M1639.500 785V997M1155 978.500H1690M1640 550.500h6M1640 579.500h6M1640 606.500h6M1640 636.500h6M1640 663.500h6M1640 692.500h6M1640 719.500h6M1639 809.500h6M1639 821.500h3M1639 833.500h6M1639 845.500h3M1639 857.500h6M1639 869.500h3" stroke="#c00000"/>
<path d="M1155 882H1690M1640 882.500V978M1689 882V978" stroke="#c00000" stroke-width="2"/>
</svg>
<svg width="550" height="300" viewBox="0 0 1568 900" preserveAspectRatio="none" style="left:1150px;top:490px">
<g fill="none">
<path vector-effect="non-scaling-stroke" stroke="#54ffff" d="M44 105V240M67 198V330M90 335V428M135 415V503M158 415V483M204 418V470M249 437V482M295 455V515M318 462V507M341 485V515M364 470V523M409 425V480M432 440V512M455 468V543M477 530V560M498 560V617M520 603V650M566 620V647M611 635V668M634 652V686M657 665V698M726 665V710M749 682V710M771 658V716M794 683V712M862 695V724M908 707V748M931 735V767M974 725V758M997 733V768M1042 758V786M1088 770V818M1110 750V830M1202 595V707M1247 537V645"/>
<path vector-effect="non-scaling-stroke" stroke="#ff3232" d="M22 85V302M112 388V449M181 432V477M227 418V470M272 450V476M386 372V530M543 630V652M589 618V652M680 681V698M703 670V692M817 702V735M840 700V712M885 710V749M951 743V773M1019 748V788M1065 748V790M1133 755V830M1156 715V750M1179 678V735M1224 577V700M1270 484V605"/>
<path fill="#54ffff" d="M37 163h14V235h-14zM60 213h14V325h-14zM83 350h14V426h-14zM128 415h14V428h-14zM151 438h14V452h-14zM197 423h14V455h-14zM242 445h14V473h-14zM288 459h14V480h-14zM311 469h14V491h-14zM334 501h14V508h-14zM357 513h14V522h-14zM402 429h14V443h-14zM425 442h14V494h-14zM448 482h14V540h-14zM470 537h14V557h-14zM491 562h14V612h-14zM513 622h14V648h-14zM559 628h14V635h-14zM604 646h14V665h-14zM627 676h14V681h-14zM650 681h14V684h-14zM719 676h14V695h-14zM742 694h14V702h-14zM764 665h14V713h-14zM787 688h14V706h-14zM855 706h14V718h-14zM901 710h14V744h-14zM924 738h14V767h-14zM967 742h14V757h-14zM990 762h14V767h-14zM1035 765h14V785h-14zM1081 782h14V808h-14zM1103 772h14V830h-14zM1195 618h14V707h-14zM1240 605h14V623h-14z"/>
<path vector-effect="non-scaling-stroke" fill="#000" stroke="#ff3232" d="M15 163h14V302h-14zM105 415h14V449h-14zM174 445h14V455h-14zM220 440h14V467h-14zM265 453h14V473h-14zM379 418h14V527h-14zM536 643h14V646h-14zM582 637h14V640h-14zM673 683h14V691h-14zM696 672h14V689h-14zM810 717h14V720h-14zM833 703h14V709h-14zM878 712h14V749h-14zM944 745h14V771h-14zM1012 752h14V768h-14zM1058 770h14V786h-14zM1126 760h14V830h-14zM1149 733h14V747h-14zM1172 680h14V735h-14zM1217 628h14V698h-14zM1263 484h14V605h-14z"/>
<path vector-effect="non-scaling-stroke" stroke="#0f0" d="M22 700L110 660L200 632L300 610L400 587L500 565L600 550L700 535L800 525L940 522L1075 520L1130 535L1200 567L1250 577L1315 580"/>
<path vector-effect="non-scaling-stroke" stroke="#f0f" d="M22 428L60 380L100 342L150 310L180 298L220 298L250 320L290 358L340 375L400 403L450 425L520 485L600 525L700 575L800 620L930 690L1040 722L1150 745L1210 745L1260 730L1295 700L1315 680"/>
<path vector-effect="non-scaling-stroke" stroke="#ff0" d="M22 228L60 265L100 290L150 312L180 350L220 375L250 412L290 445L330 458L370 470L420 470L450 482L500 512L560 550L600 570L650 625L700 658L780 680L840 697L900 707L950 722L1000 735L1060 750L1110 775L1150 775L1200 760L1250 730L1290 660L1315 595"/>
<path vector-effect="non-scaling-stroke" stroke="#fff" d="M22 245L45 232L70 268L95 290L120 330L150 395L180 430L205 440L230 445L270 455L300 462L330 475L360 488L390 482L420 478L450 480L478 497L498 535L525 585L560 620L600 645L640 650L680 670L720 680L760 690L800 705L860 710L900 720L950 745L1000 765L1050 770L1100 785L1130 795L1160 770L1190 745L1220 700L1250 665L1275 610L1300 520L1315 448"/>
<path vector-effect="non-scaling-stroke" stroke="#fff" d="M1309 157H1320M1285 328H1297"/>
<path vector-effect="non-scaling-stroke" stroke="#bbb" d="M22 85L55 97M1133 835H1168"/>
</g>
<path fill="#f0f" d="M15 72h6v8h-6zM37 72h6v8h-6zM62 72h6v8h-6zM313 72h6v8h-6zM335 72h6v8h-6zM381 72h6v8h-6zM605 72h6v8h-6zM629 72h6v8h-6zM811 72h6v8h-6zM925 72h6v8h-6zM1082 72h6v8h-6zM1128 72h6v8h-6zM1151 72h6v8h-6zM1196 72h6v8h-6zM1219 72h6v8h-6zM1242 72h6v8h-6zM1265 72h6v8h-6zM1287 72h6v8h-6zM1311 72h6v8h-6z"/>
<rect x="1136" y="845" width="36" height="35" fill="#1a4a7a"/><rect x="1272" y="845" width="36" height="35" fill="#8a0f0f"/>
</svg>
<i class="gy" style="left:1172px;top:522px">57.96</i><i class="gy" style="left:1561px;top:770px">35.63</i>
<i class="f12 wh c" style="left:1555px;top:778px">财</i><i class="f12 wh c" style="left:1603px;top:778px">张</i><i class="f12 bd re c" style="left:1204px;top:778px">$</i>
<i class="re" style="left:1655px;top:550px">55.00</i><i class="re" style="left:1655px;top:579px">52.50</i><i class="re" style="left:1655px;top:606px">50.00</i><i class="re" style="left:1655px;top:636px">47.50</i><i class="re" style="left:1655px;top:663px">45.00</i><i class="re" style="left:1655px;top:692px">42.50</i><i class="re" style="left:1655px;top:719px">40.00</i>

<!-- volume & MACD -->
<i class="gy" style="left:1172px;top:794px;font-size:12px">VOLUME: 6380</i><i class="wh" style="left:1261px;top:794px;font-size:12px">MA5: 56738</i><i class="ye" style="left:1329px;top:794px;font-size:12px">MA10: 44703</i>
<i class="re" style="left:1650px;top:809px">90000</i><i class="re" style="left:1650px;top:833px">60000</i><i class="re" style="left:1650px;top:857px">30000</i>
<svg width="736" height="239" viewBox="0 0 1568 717" preserveAspectRatio="none" style="left:1150px;top:780px" fill="none">
<path fill="#54ffff" d="M28 186h11V303h-11zM45 204h11V303h-11zM62 216h11V303h-11zM96 240h11V303h-11zM113 233h11V303h-11zM147 252h11V303h-11zM181 258h11V303h-11zM215 258h11V303h-11zM232 266h11V303h-11zM249 262h11V303h-11zM300 192h11V303h-11zM317 246h11V303h-11zM334 238h11V303h-11zM368 258h11V303h-11zM385 268h11V303h-11zM419 272h11V303h-11zM453 270h11V303h-11zM470 270h11V303h-11zM487 278h11V303h-11zM538 258h11V303h-11zM555 240h11V303h-11zM572 226h11V303h-11zM589 262h11V303h-11zM606 264h11V303h-11zM640 266h11V303h-11zM674 270h11V303h-11zM691 277h11V303h-11zM725 272h11V303h-11zM742 277h11V303h-11zM776 276h11V303h-11zM810 270h11V303h-11zM827 268h11V303h-11zM893 129h11V303h-11zM927 75h11V303h-11z"/>
<path vector-effect="non-scaling-stroke" stroke="#ff3232" d="M12 132h11V303h-11zM79 229h11V303h-11zM130 233h11V303h-11zM164 252h11V303h-11zM198 262h11V303h-11zM266 262h11V303h-11zM283 115h11V303h-11zM351 250h11V303h-11zM402 277h11V303h-11zM436 265h11V303h-11zM504 272h11V303h-11zM521 272h11V303h-11zM623 268h11V303h-11zM657 266h11V303h-11zM708 272h11V303h-11zM759 276h11V303h-11zM793 268h11V303h-11zM844 244h11V303h-11zM861 253h11V303h-11zM877 217h11V303h-11zM910 94h11V303h-11zM944 97h11V303h-11zM961 268h11V303h-11zM978 283h11V303h-11z"/>
<path vector-effect="non-scaling-stroke" stroke="#ff0" d="M17 132L60 175L110 190L150 205L200 238L270 258L300 238L360 235L440 238L470 260L520 270L600 262L700 262L740 272L830 272L880 265L910 240L950 190L980 193"/>
<path vector-effect="non-scaling-stroke" stroke="#fff" d="M17 160L45 158L70 180L100 215L140 235L200 250L260 262L290 225L320 212L355 208L375 240L420 258L480 268L540 268L580 252L610 246L650 258L720 270L800 275L860 265L885 245L910 190L950 120L980 160"/>
<path vector-effect="non-scaling-stroke" stroke="#54ffff" d="M50 508V527M67 508V550M84 508V570M101 508V583M118 508V587M135 508V587M152 508V585M169 508V580M186 508V577M203 508V572M220 508V566M237 508V560M254 508V555M271 508V552M288 508V545M305 508V538M322 508V538M339 508V535M356 508V530M373 508V545M390 508V555M407 508V550M424 508V545M441 508V548M458 508V540M475 508V540M492 508V535M509 508V537M526 508V527M543 508V523M560 508V523M577 508V518M594 508V515M611 508V512"/>
<path vector-effect="non-scaling-stroke" stroke="#ff3232" d="M17 500V508M865 495V508M882 483V508M898 480V508M915 466V508M932 461V508M949 440V508M966 413V508M983 378V508"/>
<path vector-effect="non-scaling-stroke" stroke="#ff0" stroke-width="1.300" d="M17 367L60 378L110 402L170 435L230 467L290 490L340 502L400 520L500 553L600 565L700 562L830 562L890 550L940 535L983 505"/>
<path vector-effect="non-scaling-stroke" stroke="#fff" d="M17 367L45 372L70 400L100 430L150 465L230 497L270 512L300 508L350 515L400 548L500 567L620 567L700 565L835 562L900 530L940 510L965 470L983 437"/>
<path vector-effect="non-scaling-stroke" stroke="#c00000" d="M150 595V640M240 595V603M350 595V603M507 595V640M605 595V603M700 595V603M798 595V603M895 595V640"/>
</svg>
<i class="gy" style="left:1172px;top:890px;font-size:12px">MACD(12,26,9)</i><i class="wh" style="left:1260px;top:890px;font-size:12px">DIF: 2.13</i><i class="ye" style="left:1315px;top:890px;font-size:12px">DEA: 0.15</i><i class="ma" style="left:1373px;top:890px;font-size:12px">MACD: 3.96</i>
<i class="re" style="left:1661px;top:922px">2.50</i><i class="re" style="left:1661px;top:949px">0.00</i>
<i class="re" style="left:1158px;top:987px">2023年</i><i class="re" style="left:1220px;top:987px">7</i><i class="re" style="left:1388px;top:987px">8</i><i class="re" style="left:1571px;top:987px">9</i><i class="gy" style="left:1652px;top:987px">日线</i>

<!-- toolbar -->
<div class="tb" style="left:1155px;width:535px"></div>
<svg width="1886" height="1019" stroke="#000"><path d="M1192.500 997V1014M1222.500 997V1014M1261.500 997V1014M1292.500 997V1014M1325.500 997V1014M1353.500 997V1014M1384.500 997V1014M1425.500 997V1014M1458.500 997V1014M1478.500 997V1014M1511.500 997V1014M1537.500 997V1014M1553.500 997V1014M1567.500 997V1014M1601.500 997V1014M1639.500 997V1014M1658.500 997V1014M1674.500 997V1014"/></svg>
<i class="f12 gy" style="left:1157px;top:1005px">指标A</i><i class="f12 gy" style="left:1194px;top:1005px">窗口</i><i class="f12 re" style="left:1226px;top:1005px">MACD</i><i class="f12 gy" style="left:1269px;top:1005px">DMI</i><i class="f12 gy" style="left:1297px;top:1005px">DMA</i><i class="f12 gy" style="left:1331px;top:1005px">FSL</i><i class="f12 gy" style="left:1360px;top:1005px">TRIX</i><i class="f12 gy" style="left:1394px;top:1005px">BRAR</i><i class="f12 gy" style="left:1435px;top:1005px">CR</i><i class="f12 gy" style="left:1461px;top:1005px">VR</i><i class="f12 gy" style="left:1485px;top:1005px">OBV</i><i class="f12 gy" style="left:1517px;top:1005px">ASI</i><i class="f12 gy" style="left:1542px;top:1005px">&gt;</i><i class="f12 gy" style="left:1570px;top:1005px">指标B</i><i class="f12 gy" style="left:1607px;top:1005px">模 板</i><i class="f12 gy" style="left:1644px;top:1005px">+</i><i class="f12 gy" style="left:1661px;top:1005px">-</i><i class="f12 gy" style="left:1677px;top:1005px">0</i>

<!-- right list -->
<div class="w" style="left:1699px;top:507px"><u class="sy" style="text-decoration:none">同步</u><em class="h1">代码</em><em class="h2">名称[16]</em><em class="h3">●</em></div>
<div class="w" style="left:1699px;top:529px"><b class="i">1</b><b class="co">001368</b><em class="nm">通达创智</em><b class="N">N</b><u class="ln" style="width:142px"></u></div>
<div class="w" style="left:1699px;top:551px"><b class="i">2</b><b class="co">300097</b><em class="nm">智云股份</em></div>
<div class="w" style="left:1699px;top:573px"><b class="i">3</b><b class="co">000046</b><em class="nm"><b style="font-size:14px">*ST</b>泛海</em></div>
<div class="w" style="left:1699px;top:595px"><b class="i">4</b><b class="co">300814</b><em class="nm">中富电路</em><u class="dot"></u><b class="Z">Z</b></div>
<div class="w" style="left:1699px;top:617px"><b class="i">5</b><b class="co">300917</b><em class="nm">特发服务</em><b class="Z">Z</b></div>
<div class="w" style="left:1699px;top:639px"><b class="i">6</b><b class="co">000609</b><em class="nm">中迪投资</em></div>
<div class="w" style="left:1699px;top:661px"><b class="i">7</b><b class="co">002855</b><em class="nm">捷荣技术</em><u class="dot"></u></div>
<div class="w" style="left:1699px;top:683px"><b class="i">8</b><b class="co">600280</b><em class="nm">中央商场</em></div>
<div class="w" style="left:1699px;top:705px"><b class="i">9</b><b class="co">600540</b><em class="nm">新赛股份</em><u class="dot"></u></div>
<div class="w" style="left:1699px;top:727px"><b class="i">10</b><b class="co">000766</b><em class="nm">通化金马</em><b class="Z">F</b></div>
<div class="w" style="left:1699px;top:749px"><b class="i">11</b><b class="co">603125</b><em class="nm">常青科技</em><u class="dot"></u><b class="Z">F</b></div>
<div class="w" style="left:1699px;top:771px"><b class="i">12</b><b class="co">603256</b><em class="nm">宏和科技</em><u class="dot"></u></div>
<div class="w" style="left:1699px;top:793px"><b class="i">13</b><b class="co">605588</b><em class="nm">冠石科技</em><u class="dot"></u></div>
<div class="w" style="left:1699px;top:815px"><b class="i">14</b><b class="co">688651</b><em class="nm">盛邦安全</em><b class="Z">H</b></div>
<div class="w" style="left:1699px;top:837px"><b class="i">15</b><b class="co">002565</b><em class="nm">顺灏股份</em><b class="Z">F</b></div>
<div class="w" style="left:1699px;top:859px"><b class="i">16</b><b class="co">002750</b><em class="nm">龙津药业</em><u class="dot"></u><b class="Z">F</b></div>
<div class="tb" style="left:1692px;width:194px"></div><i class="f12 gy" style="left:1696px;top:1005px">啄木鸟_沪深▲</i>

</body></html>
